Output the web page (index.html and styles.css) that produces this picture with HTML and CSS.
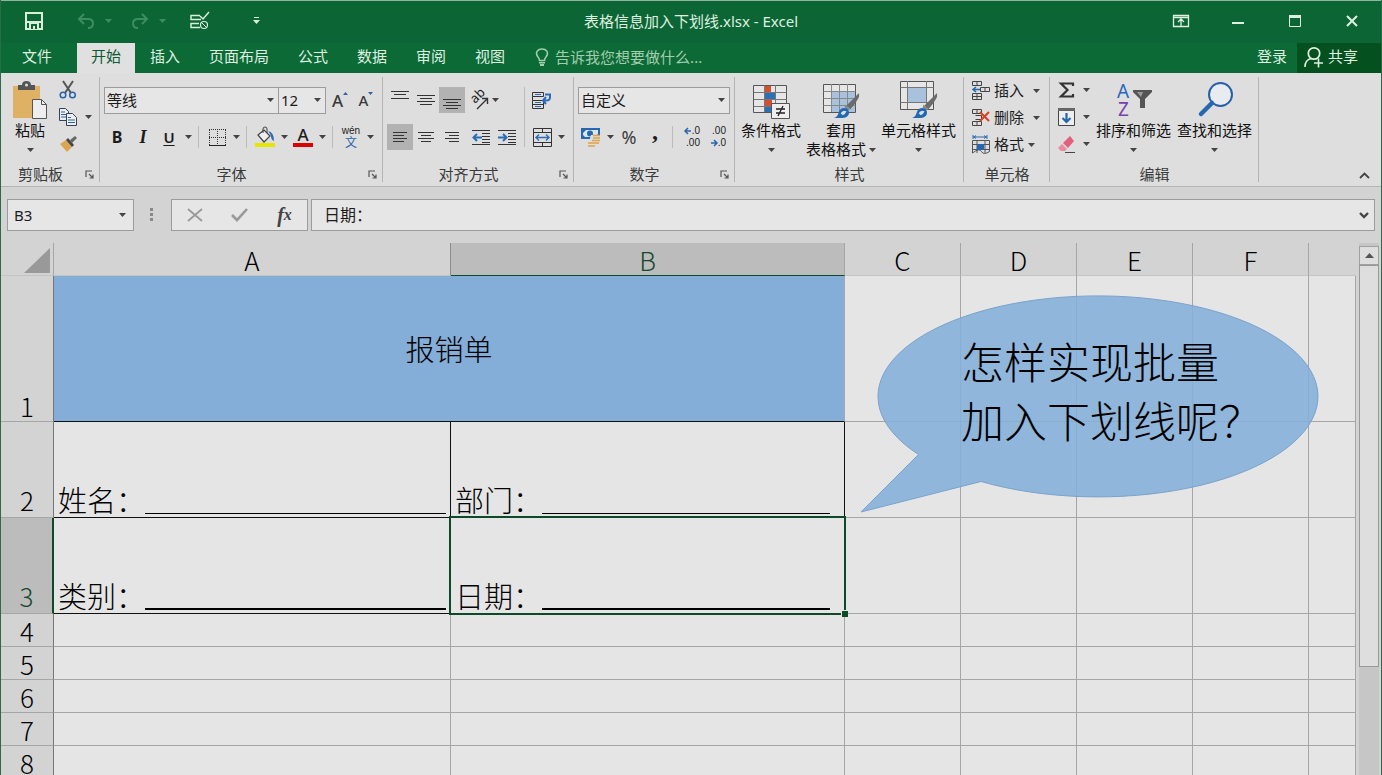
FILE: index.html
```html
<!DOCTYPE html>
<html lang="zh-CN">
<head>
<meta charset="utf-8">
<title>表格信息加入下划线.xlsx - Excel</title>
<link rel="stylesheet" href="styles.css">
</head>
<body>
<svg class="defs" aria-hidden="true">
  <symbol id="caret" viewBox="0 0 7 4"><path d="M0 0h7L3.500 4z" fill="currentColor"/></symbol>
  <symbol id="launch" viewBox="0 0 9 9"><path d="M1 7V1h6M4 4l4 4M8 4.500v3.500H4.500" fill="none" stroke="#555" stroke-width="1.200"/></symbol>
  <symbol id="brush" viewBox="0 0 28 28"><path d="M27 1L14 14l4 4q7-8 9-13z" fill="#6b6b6b"/><path d="M13 13l5 5-3 1-3-3z" fill="#888"/><path d="M1 27q4-1 5-6c1-5 8-6 10-2s-1 8-6 8z" fill="#2567ae"/><path d="M8 22q2-4 6-2-1 3-4 4z" fill="#cfe0f2"/></symbol>
</svg>
<div class="app">
  <header class="titlebar">
    <div class="quick">
      <button class="q-save" aria-label="保存"><svg width="18" height="18" viewBox="0 0 18 18"><path d="M1 1h16v16H1z" fill="none" stroke="#d8efd9" stroke-width="2"/><path d="M1 9h16v2H1zM4 11h10v6H4z" fill="#d8efd9"/><path d="M6 12h6v5h-2v-3H8v3H6z" fill="#0b6634"/></svg></button>
      <button class="q-step dim" aria-label="撤消"><svg width="18" height="16" viewBox="0 0 18 16"><path d="M7 1L2 6l5 5M2 6h9q5 0 5 4.500T11 15" fill="none" stroke="currentColor" stroke-width="2"/></svg><svg class="caret"><use href="#caret"/></svg></button>
      <button class="q-step dim" aria-label="恢复"><svg width="18" height="16" viewBox="0 0 18 16"><path d="M11 1l5 5-5 5M16 6H7q-5 0-5 4.500T7 15" fill="none" stroke="currentColor" stroke-width="2"/></svg><svg class="caret"><use href="#caret"/></svg></button>
      <button class="q-list" aria-label="标记"><svg width="20" height="18" viewBox="0 0 20 18"><path d="M10 3.500H1v4h10M9 11.500H1v4h9M10 4l3 3 6-7" fill="none" stroke="#d8efd9" stroke-width="1.500"/><circle cx="14" cy="13" r="3.500" fill="none" stroke="#d8efd9" stroke-width="1.200"/><path d="M12 11l4 4" stroke="#d8efd9"/></svg></button>
      <button class="q-more" aria-label="自定义快速访问工具栏"><svg width="7" height="8" viewBox="0 0 7 8"><path d="M1 0h5v1H1zM0 3h7L3.500 7z" fill="#d8efd9"/></svg></button>
    </div>
    <h1>表格信息加入下划线.xlsx - Excel</h1>
    <div class="window">
      <button aria-label="功能区显示选项"><svg width="16" height="12" viewBox="0 0 16 12"><path d="M.5.5h15v11H.5zM1 2.500h14M8 11V5M5 7l3-3 3 3" fill="none" stroke="#dff0e0" stroke-width="1.300"/></svg></button>
      <button aria-label="最小化"><svg width="12" height="12" viewBox="0 0 12 12"><path d="M0 7h12v2H0z" fill="#dff0e0"/></svg></button>
      <button aria-label="最大化"><svg width="12" height="12" viewBox="0 0 12 12"><path d="M.5 1.500h11v10H.5z" fill="none" stroke="#dff0e0"/><path d="M0 0h12v3H0z" fill="#dff0e0"/></svg></button>
      <button aria-label="关闭"><svg width="12" height="12" viewBox="0 0 12 12"><path d="M1 1l10 10M11 1L1 11" stroke="#dff0e0" stroke-width="2"/></svg></button>
    </div>
  </header>
  <nav class="tabs">
    <button class="tab file">文件</button>
    <button class="tab active">开始</button>
    <button class="tab">插入</button>
    <button class="tab">页面布局</button>
    <button class="tab">公式</button>
    <button class="tab">数据</button>
    <button class="tab">审阅</button>
    <button class="tab">视图</button>
    <label class="tell"><svg width="14" height="18" viewBox="0 0 14 18"><path d="M4.500 12.500Q4.500 10.500 3 9C-.5 4 3 1 7 1s7.500 3 4 8q-1.500 1.500-1.500 3.500z" fill="none" stroke="currentColor" stroke-width="1.600"/><path d="M4 14h6v1.500H4zM5 16h4v2H5z" fill="currentColor"/></svg><input type="text" placeholder="告诉我您想要做什么..."></label>
    <button class="login">登录</button>
    <button class="share"><svg width="20" height="22" viewBox="0 0 20 22"><circle cx="10" cy="7.500" r="5.700" fill="none" stroke="#dff0e0" stroke-width="1.700"/><path d="M1 21q0-7 6-8.500M10 17h9M14.500 12.500v9" fill="none" stroke="#dff0e0" stroke-width="1.600"/></svg>共享</button>
  </nav>

  <section class="ribbon">
    <div class="group g-clip">
      <div class="body">
        <button class="big paste"><svg width="36" height="38" viewBox="0 0 36 38"><path d="M1 5h27v32H1z" fill="#dfb164"/><path d="M6 9V4h4q0-4 4.500-4T19 4h4v5z" fill="#555"/><circle cx="14.500" cy="4" r="1.500" fill="#ddd"/><path d="M20.500 18.500h9l5 5v14h-14z" fill="#eee" stroke="#555"/><path d="M29.500 18.500v5h5" fill="none" stroke="#555"/></svg><span>粘贴</span><svg class="caret"><use href="#caret"/></svg></button>
        <div class="stack">
          <button aria-label="剪切"><svg width="18" height="18" viewBox="0 0 18 18"><path d="M4 0l8 12M14 0L6 12" stroke="#555" stroke-width="2" fill="none"/><circle cx="4" cy="14" r="2.800" fill="none" stroke="#2b62a8" stroke-width="1.500"/><circle cx="13.500" cy="14" r="2.800" fill="none" stroke="#2b62a8" stroke-width="1.500"/></svg></button>
          <button aria-label="复制"><svg width="18" height="18" viewBox="0 0 18 18"><path d="M.5.5h6l3 3v9h-9z" fill="#eee" stroke="#345"/><path d="M2 4h4M2 6.500h6M2 9h6" stroke="#2b62a8"/><path d="M7.500 5.500h6l4 4v8h-10z" fill="#eee" stroke="#345"/><path d="M9 9.500h3M9 12h7M9 14.500h7" stroke="#2b62a8"/></svg><svg class="caret"><use href="#caret"/></svg></button>
          <button aria-label="格式刷"><svg width="18" height="16" viewBox="0 0 18 16"><path d="M1 8l6-4 6 7-5 5z" fill="#dca552"/><path d="M7 4l2-2 6 7-2 2z" fill="#444"/><path d="M11 4l5-4 2 2-5 5z" fill="#666"/></svg></button>
        </div>
      </div>
      <div class="foot"><span>剪贴板</span><button aria-label="剪贴板设置"><svg width="9" height="9"><use href="#launch"/></svg></button></div>
    </div>

    <div class="group g-font">
      <div class="rows">
        <div class="row">
          <select class="s-font" aria-label="字体"><option>等线</option></select><select class="s-size" aria-label="字号"><option>12</option></select>
          <button class="w26 grow" aria-label="增大字号"><b>A</b><svg width="5" height="3" viewBox="0 0 5 3"><path d="M0 3h5L2.500 0z" fill="#2b62a8"/></svg></button>
          <button class="w26 grow small" aria-label="减小字号"><b>A</b><svg width="5" height="3" viewBox="0 0 5 3"><path d="M0 0h5L2.500 3z" fill="#2b62a8"/></svg></button>
        </div>
        <div class="row">
          <button class="w26 bold">B</button><button class="w26 ital">I</button><button class="w26 under">U</button><button class="drop"><svg class="caret"><use href="#caret"/></svg></button><i class="sep"></i>
          <button class="w26" aria-label="边框"><svg width="17" height="17" viewBox="0 0 17 17"><path d="M.5 16V0M16.500 16V0M0 .5h17M8.500 0v17M0 8.500h17" stroke="#333" stroke-dasharray="1 1"/><path d="M0 16.500h17" stroke="#222"/></svg></button><button class="drop"><svg class="caret"><use href="#caret"/></svg></button><i class="sep"></i>
          <button class="w26" aria-label="填充颜色"><svg width="20" height="20" viewBox="0 0 20 20"><path d="M3 8l6-5 6 6-6 6z" fill="#eee" stroke="#444" stroke-width="1.200"/><path d="M8 6V2q0-2 2-2t2 2v4" fill="none" stroke="#444"/><path d="M13 4q6 1 6 10-3-1-3-5-1-3-3-5z" fill="#2b6cb8"/><path d="M0 16h20v4H0z" fill="#e6e600"/></svg></button><button class="drop"><svg class="caret"><use href="#caret"/></svg></button>
          <button class="w26 colour" aria-label="字体颜色"><b>A</b></button><button class="drop"><svg class="caret"><use href="#caret"/></svg></button><i class="sep"></i>
          <button class="w26 wen" aria-label="拼音指南"><small>wén</small><span>文</span></button><button class="drop"><svg class="caret"><use href="#caret"/></svg></button>
        </div>
      </div>
      <div class="foot"><span>字体</span><button aria-label="字体设置"><svg width="9" height="9"><use href="#launch"/></svg></button></div>
    </div>

    <div class="group g-align">
      <div class="body">
        <div class="rows">
          <div class="row">
            <button class="w26" aria-label="顶端对齐"><svg width="18" height="20" viewBox="0 0 18 20"><path d="M0 1.500h18M3 4.500h12M0 8.500h18" stroke="#333"/></svg></button><button class="w26" aria-label="垂直居中"><svg width="18" height="16" viewBox="0 0 18 16"><path d="M0 3.500h18M3 6.500h12M0 9.500h18M3 12.500h12" stroke="#333"/></svg></button><button class="w26 on" aria-label="底端对齐"><svg width="18" height="18" viewBox="0 0 18 18"><path d="M0 8.500h18M3 11.500h12M0 14.500h18M3 17.500h12" stroke="#333"/></svg></button>
            <button class="turn" aria-label="方向"><svg width="20" height="20" viewBox="0 0 20 20"><text x="0" y="0" transform="translate(6 14) rotate(-45)" font-size="13" fill="#222" class="svgtext">ab</text><path d="M8 19L18 9M13 8.500h5.500V14" fill="none" stroke="#333" stroke-width="1.400"/></svg><svg class="caret"><use href="#caret"/></svg></button>
          </div>
          <div class="row">
            <button class="w26 on" aria-label="左对齐"><svg width="14" height="12" viewBox="0 0 14 12"><path d="M0 1.500h14M0 4.500h11M0 7.500h14M0 10.500h11" stroke="#333"/></svg></button><button class="w26" aria-label="居中"><svg width="16" height="12" viewBox="0 0 16 12"><path d="M0 1.500h16M3 4.500h10M0 7.500h16M3 10.500h10" stroke="#333"/></svg></button><button class="w26" aria-label="右对齐"><svg width="14" height="12" viewBox="0 0 14 12"><path d="M0 1.500h14M4 4.500h10M0 7.500h14M4 10.500h10" stroke="#333"/></svg></button>
            <button class="w26 indent" aria-label="减少缩进"><svg width="18" height="17" viewBox="0 0 18 17"><path d="M0 1.500h18M10 4.500h8M10 7.500h8M10 10.500h8M0 15.500h18M10 13.500h8" stroke="#333"/><path d="M10 8.500H2M5 5L1.500 8.500 5 12" fill="none" stroke="#2b6cb8" stroke-width="2"/></svg></button><button class="w26" aria-label="增加缩进"><svg width="18" height="17" viewBox="0 0 18 17"><path d="M0 1.500h18M10 4.500h8M10 7.500h8M10 10.500h8M0 15.500h18M10 13.500h8" stroke="#333"/><path d="M0 8.500h8M5 5l3.500 3.500L5 12" fill="none" stroke="#2b6cb8" stroke-width="2"/></svg></button>
          </div>
        </div>
        <i class="sep tall"></i>
        <div class="rows">
          <div class="row"><button class="w26" aria-label="自动换行"><svg width="20" height="19" viewBox="0 0 20 19"><path d="M.5 1.500h11v4H.5zM.5 9.500h11v8H.5zM.5 5.500v4M.5 13.500h11" fill="none" stroke="#333"/><path d="M3 3.500h6M3 11.500h6M3 15.500h6" stroke="#2b6cb8"/><path d="M13 3.500h5v3q0 3-4 3h-2M14 6l-3 3.500L14 13" fill="none" stroke="#2b6cb8" stroke-width="2"/></svg></button></div>
          <div class="row"><button class="w26" aria-label="合并后居中"><svg width="19" height="19" viewBox="0 0 19 19"><path d="M.5.500h18v18H.5zM.5 4.500h18M.5 14.500h18M9.500 0v4M9.500 15v4" fill="none" stroke="#333"/><path d="M3 9.500h13M6 6.500l-3 3 3 3M13 6.500l3 3-3 3" fill="none" stroke="#2b6cb8" stroke-width="1.400"/></svg></button><button class="drop"><svg class="caret"><use href="#caret"/></svg></button></div>
        </div>
      </div>
      <div class="foot"><span>对齐方式</span><button aria-label="对齐设置"><svg width="9" height="9"><use href="#launch"/></svg></button></div>
    </div>

    <div class="group g-num">
      <div class="rows">
        <div class="row"><select class="s-num" aria-label="数字格式"><option>自定义</option></select></div>
        <div class="row">
          <button class="w26" aria-label="会计数字格式"><svg width="20" height="19" viewBox="0 0 20 19"><path d="M0 0h19v11H0z" fill="#2767b0"/><path d="M2 2h15v7H2z" fill="#d8e4f0"/><path d="M2 2h3L2 5zM17 9V6l-3 3zM2 9V7l2 2z" fill="#2767b0"/><circle cx="9" cy="5.500" r="3" fill="#2767b0"/><path d="M10 7h9v12h-7v-3h-3v-6z" fill="#dedede"/><path d="M12 7.500h7M12 10h7M11 12.500h8M7 15h11M7 18h7" stroke="#dfa348" stroke-width="1.700"/></svg></button><button class="drop"><svg class="caret"><use href="#caret"/></svg></button><button class="w26 pct">%</button><button class="w26 comma">,</button><i class="sep"></i>
          <button class="w26 dec" aria-label="增加小数位数"><span><svg width="6" height="6" viewBox="0 0 6 6"><path d="M6 3H1M3 0L0 3l3 3" fill="none" stroke="#2767b0" stroke-width="1.500"/></svg>.0</span><span>.00</span></button><button class="w26 dec" aria-label="减少小数位数"><span>.00</span><span><svg width="6" height="6" viewBox="0 0 6 6"><path d="M0 3h5M3 0l3 3-3 3" fill="none" stroke="#2767b0" stroke-width="1.500"/></svg>.0</span></button>
        </div>
      </div>
      <div class="foot"><span>数字</span><button aria-label="数字设置"><svg width="9" height="9"><use href="#launch"/></svg></button></div>
    </div>

    <div class="group g-style">
      <div class="body">
        <button class="big"><svg width="37" height="38" viewBox="0 0 37 38"><path d="M.5 4.500h33v27H.5z" fill="#e6e6e6" stroke="#555"/><path d="M11 5h7v7h-7zM11 18h8v7h-8z" fill="#d8502b"/><path d="M11 12h11v6H11zM11 25h7v6h-7z" fill="#2a70b8"/><path d="M.5 11.500h33M.5 18.500h33M.5 25.500h33M11.500 4v27M22.500 4v27" stroke="#777" fill="none"/><path d="M18.500 22.500h18v15h-18z" fill="#eee" stroke="#555"/><path d="M23 28h9M23 32h9M30 25l-5 10" stroke="#222" stroke-width="1.300"/></svg><span>条件格式</span><svg class="caret"><use href="#caret"/></svg></button>
        <button class="big"><svg width="37" height="38" viewBox="0 0 37 38"><path d="M.5 3.500h32v28H.5z" fill="#e6e6e6" stroke="#555"/><path d="M9 11h23v20H9z" fill="#a8c2de"/><path d="M.5 10.500h32M.5 17.500h32M.5 24.500h32M8.500 3v28M16.500 3v28M24.500 3v28" stroke="#888"/><use href="#brush" x="10" y="11" width="27" height="27"/></svg><span>套用</span><span>表格格式<svg class="caret"><use href="#caret"/></svg></span></button>
        <button class="big"><svg width="38" height="38" viewBox="0 0 38 38"><path d="M.5.500h33v28H.5z" fill="#e6e6e6" stroke="#555"/><path d="M8 7h18v14H8z" fill="#a8c2de"/><path d="M.5 6.500h33M.5 21.500h33M7.500 0v28M26.500 0v28" stroke="#777"/><use href="#brush" x="11" y="11" width="27" height="27"/></svg><span>单元格样式</span><svg class="caret"><use href="#caret"/></svg></button>
      </div>
      <div class="foot"><span>样式</span></div>
    </div>

    <div class="group g-cell">
      <div class="list">
        <button><svg width="18" height="19" viewBox="0 0 18 19"><path d="M.5.500h9v4h-9zM5 0v5M8.500 6.500h9v4h-9zM13 6v5M.5 12.500h9v6h-9zM5 12v6M.5 15.500h9" fill="none" stroke="#444"/><path d="M8 8.500H1M4 6L1 8.500 4 11" fill="none" stroke="#2767b0" stroke-width="1.500"/></svg><span>插入</span><svg class="caret"><use href="#caret"/></svg></button>
        <button><svg width="18" height="17" viewBox="0 0 18 17"><path d="M.5.500h9v4h-9zM5 0v5M3.500 6.500h6v4h-6M.5 12.500h9v4h-9zM5 12v5" fill="none" stroke="#444"/><path d="M8 3l9 9M17 3l-9 9" stroke="#d8401f" stroke-width="2"/></svg><span>删除</span><svg class="caret"><use href="#caret"/></svg></button>
        <button class="fmt"><svg width="18" height="19" viewBox="0 0 18 19"><path d="M1 0v4M15 0v4M1 2h14M4 .5L2 2l2 1.500M12 .5L14 2l-2 1.500" fill="none" stroke="#2767b0"/><path d="M.5 5.500h17v11q-6 4-8 0T.5 18zM.5 9.500h17M.5 14.500h17M5 5v13M13 5v13" fill="none" stroke="#555"/><path d="M5 9h7v6H5z" fill="#2767b0"/></svg><span>格式</span><svg class="caret"><use href="#caret"/></svg></button>
      </div>
      <div class="foot"><span>单元格</span></div>
    </div>

    <div class="group g-edit">
      <div class="body">
        <div class="stack">
          <button aria-label="自动求和"><svg width="17" height="16" viewBox="0 0 17 16"><path d="M15 4V1.500H3L9.500 8 3 14.500h12V12" fill="none" stroke="#333" stroke-width="2.200"/></svg><svg class="caret"><use href="#caret"/></svg></button>
          <button aria-label="填充"><svg width="17" height="18" viewBox="0 0 17 18"><path d="M.5.500h16v17H.5z" fill="#eee" stroke="#444"/><path d="M0 0h17v3H0z" fill="#666"/><path d="M8.500 5v9M4.500 10l4 4 4-4" fill="none" stroke="#2767b0" stroke-width="2.200"/></svg><svg class="caret"><use href="#caret"/></svg></button>
          <button aria-label="清除"><svg width="17" height="17" viewBox="0 0 17 17"><path d="M5 7l7-7 4 5-6 7z" fill="#e2607a"/><path d="M4 8l5 5-2 2H3l-3-3z" fill="#e98b9c"/><path d="M7 16.500h10" stroke="#444"/></svg><svg class="caret"><use href="#caret"/></svg></button>
        </div>
        <button class="big"><svg width="36" height="38" viewBox="0 0 36 38"><text x="1" y="17" font-size="19" fill="#2767c0" class="svgtext">A</text><text x="2" y="35" font-size="19" fill="#7a3fb0" class="svgtext">Z</text><path d="M17 9h19v2l-7 7v9h-5v-9l-7-7z" fill="#555"/><path d="M21 11h6l-2 5z" fill="#999"/></svg><span>排序和筛选</span><svg class="caret"><use href="#caret"/></svg></button>
        <button class="big"><svg width="36" height="38" viewBox="0 0 36 38"><circle cx="23.500" cy="13.500" r="11.500" fill="#e8ecf0" stroke="#2760a8" stroke-width="2"/><path d="M15 22L4 33" stroke="#2767b0" stroke-width="4.500" stroke-linecap="round"/></svg><span>查找和选择</span><svg class="caret"><use href="#caret"/></svg></button>
      </div>
      <div class="foot"><span>编辑</span></div>
    </div>
    <button class="collapse" aria-label="折叠功能区"><svg width="11" height="7" viewBox="0 0 11 7"><path d="M1 6l4.500-4.500L10 6" fill="none" stroke="#444" stroke-width="1.800"/></svg></button>
  </section>

  <section class="formula">
    <select class="name" aria-label="名称框"><option>B3</option></select>
    <svg class="dots" width="4" height="14" viewBox="0 0 4 14"><path d="M0 0h3v3H0zM0 5h3v3H0zM0 10h3v3H0z" fill="#888"/></svg>
    <div class="entry">
      <button aria-label="取消"><svg width="16" height="14" viewBox="0 0 16 14"><path d="M1 1l14 12M15 1L1 13" stroke="#999" stroke-width="1.800"/></svg></button>
      <button aria-label="输入"><svg width="17" height="14" viewBox="0 0 17 14"><path d="M1 7l5 5L16 1" fill="none" stroke="#999" stroke-width="2.600"/></svg></button>
      <button class="fx" aria-label="插入函数">f<sub>x</sub></button>
    </div>
    <label class="edit"><input type="text" aria-label="编辑栏" value="日期："><svg width="10" height="7" viewBox="0 0 10 7"><path d="M1 1l4 4 4-4" fill="none" stroke="#444" stroke-width="2.400"/></svg></label>
  </section>

  <main class="sheet">
    <table>
      <colgroup><col class="c-head"><col class="c-a"><col class="c-b"><col class="c-n"><col class="c-n"><col class="c-n"><col class="c-n"><col></colgroup>
      <thead><tr><th><svg class="corner" width="26" height="25" viewBox="0 0 26 25"><path d="M26 0v25H0z" fill="#999"/></svg></th><th>A</th><th class="sel">B</th><th>C</th><th>D</th><th>E</th><th>F</th><th class="cut"></th></tr></thead>
      <tbody>
        <tr class="r1"><th>1</th><td colspan="2" class="heading">报销单</td><td></td><td></td><td></td><td></td><td></td></tr>
        <tr class="r2"><th>2</th><td class="ink"><div class="line">姓名：<span></span></div></td><td class="ink"><div class="line short">部门：<span></span></div></td><td></td><td></td><td></td><td></td><td></td></tr>
        <tr class="r3"><th class="sel">3</th><td class="ink"><div class="line thick">类别：<span></span></div></td><td class="ink picked"><div class="line thick short">日期：<span></span></div></td><td></td><td></td><td></td><td></td><td></td></tr>
        <tr><th>4</th><td></td><td></td><td></td><td></td><td></td><td></td><td></td></tr>
        <tr><th>5</th><td></td><td></td><td></td><td></td><td></td><td></td><td></td></tr>
        <tr><th>6</th><td></td><td></td><td></td><td></td><td></td><td></td><td></td></tr>
        <tr><th>7</th><td></td><td></td><td></td><td></td><td></td><td></td><td></td></tr>
        <tr><th>8</th><td></td><td></td><td></td><td></td><td></td><td></td><td></td></tr>
      </tbody>
    </table>
    <div class="scroll"><button aria-label="向上滚动"><svg width="9" height="5" viewBox="0 0 9 5"><path d="M0 5h9L4.500 0z" fill="#555"/></svg></button><div class="thumb"></div></div>
    <div class="bubble">
      <svg width="460" height="222" viewBox="0 0 460 222"><path d="M58.500 161.500A220 100.500 0 1 1 121 188.500L1 219z" fill="#84afd9" fill-opacity=".88" stroke="#7aa2cc"/></svg>
      <p>怎样实现批量<br>加入下划线呢？</p>
    </div>
  </main>
</div>
</body>
</html>
```

FILE: styles.css
```css
* { box-sizing: border-box; }
body {
  margin: 0;
  font-family: "Noto Sans", "Noto Sans CJK SC", sans-serif;
  font-size: 15px;
  line-height: 19px;
  color: #1c1c1c;
}
button, input, select { font: inherit; color: inherit; }
button {
  display: flex;
  align-items: center;
  justify-content: center;
  padding: 0;
  border: 0;
  background: none;
}
svg { display: block; flex: none; overflow: visible; }
.defs { position: absolute; width: 0; height: 0; }
.svgtext { font-family: "Noto Sans", sans-serif; }
.caret { width: 7px; height: 4px; color: #444; }
.app {
  display: flex;
  flex-direction: column;
  height: 100vh;
  overflow: hidden;
  background: #d3d3d3;
  border-left: 1px solid #2a6b49;
  border-right: 1px solid #2a6b49;
}

.titlebar {
  display: grid;
  grid-template-columns: 1fr auto 1fr;
  align-items: center;
  height: 43px;
  flex: none;
  padding-bottom: 2px;
  border-top: 1px solid #8fb59c;
  background: #0c6535;
  color: #dff0e0;
}
.titlebar h1 { margin: 0; font-size: 15px; font-weight: 400; }
.quick { display: flex; align-items: center; padding-left: 24px; }
.q-save { width: 18px; margin-right: 34px; }
.q-step { width: 54px; gap: 10px; justify-content: flex-start; }
.dim, .dim .caret { color: #3f8c5e; }
.q-list { width: 20px; margin-left: 5px; }
.q-more { width: 20px; margin-left: 36px; }
.window { display: flex; justify-content: flex-end; padding-right: 1px; }
.window button { width: 57px; height: 40px; }

.tabs { display: flex; height: 30px; flex: none; background: #0c6a36; color: #dff0e0; }
.tab { padding: 0 14px 3px; margin-right: 1px; }
.tab.file { width: 75px; padding: 0 3px 3px 0; }
.tab.active { background: #e0e0e0; color: #0c5a30; }
.tell { display: flex; align-items: center; flex: 1; gap: 6px; margin-left: 15px; padding-bottom: 2px; color: #a3cdae; }
.tell input { flex: 1; border: 0; padding: 0; background: none; }
.tell input::placeholder { color: #a3cdae; opacity: 1; }
.login { margin-right: 10px; padding-bottom: 3px; }
.share { width: 84px; gap: 4px; padding: 0 16px 3px 0; background: #04501f; }

.ribbon {
  display: flex;
  height: 114px;
  flex: none;
  background: #dedede;
  border-bottom: 1px solid #b4b4b4;
}
.group {
  display: flex;
  flex-direction: column;
  justify-content: space-between;
  position: relative;
  padding: 8px 4px 2px;
}
.group::after {
  content: "";
  position: absolute;
  right: 0;
  top: 4px;
  bottom: 4px;
  border-right: 1px solid #b4b4b4;
}
.g-clip { width: 99px; }
.g-font { width: 283px; }
.g-align { width: 191px; }
.g-num { width: 161px; }
.g-style { width: 229px; }
.g-cell { width: 86px; }
.g-edit { width: 209px; }
.foot { display: flex; align-items: center; color: #3a3a3a; }
.foot span { flex: 1; text-align: center; }
.foot span:not(:last-child) { padding-right: 6px; }
.foot button { width: 14px; height: 14px; }
.body { display: flex; }
.rows { display: flex; flex-direction: column; gap: 11px; padding-top: 6px; }
.row { display: flex; align-items: center; height: 26px; }
.w26 { width: 26px; height: 26px; }
.drop { width: 12px; height: 26px; }
.on { background: #b2b2b2; }
.sep { width: 1px; height: 22px; margin: 0 5px 0 4px; background: #bbb; }
.big { flex-direction: column; justify-content: flex-start; color: #111; }
.big > svg:first-child { margin-bottom: 2px; }
.big > span { display: flex; align-items: center; gap: 3px; white-space: nowrap; }
.big > .caret { margin-top: 8px; }
.stack { display: flex; flex-direction: column; gap: 9px; }
.stack button { height: 18px; justify-content: flex-start; gap: 8px; }
.paste { width: 50px; }
.g-clip .body { gap: 4px; }

select {
  height: 27px;
  padding: 0 2px;
  border: 1px solid #9c9c9c;
  border-radius: 0;
  appearance: none;
  background: #e6e6e6 url("data:image/svg+xml,%3Csvg xmlns='http://www.w3.org/2000/svg' width='7' height='4'%3E%3Cpath d='M0 0h7L3.5 4z' fill='%23444'/%3E%3C/svg%3E") no-repeat right 4px center;
}
.s-font { width: 175px; }
.s-size { width: 48px; margin-left: -1px; margin-right: 1px; }
.s-num { width: 152px; }
.grow { font-size: 17px; color: #3a3a3a; }
.grow b, .colour b { font-weight: 500; }
.grow svg { margin-bottom: 14px; }
.grow.small { font-size: 15px; }
.bold { font-weight: 700; font-size: 16px; }
.ital { font: italic 700 18px "Liberation Serif", serif; }
.under { font-weight: 600; text-decoration: underline; text-underline-offset: 2px; }
.colour { font-size: 17px; line-height: 16px; }
.colour b { width: 20px; border-bottom: 4px solid #dd0000; }
.wen { flex-direction: column; }
.wen small { font: 10px/11px "Liberation Sans", sans-serif; }
.wen span { font-size: 12px; line-height: 13px; color: #2767b0; }
.turn { width: 38px; height: 26px; gap: 3px; }
.indent { margin-left: 3px; }
.tall { height: 60px; margin: 6px 4px 0; }
.pct { font-size: 18px; color: #3a3a3a; }
.comma { font: 700 24px "Liberation Serif", serif; padding-bottom: 12px; }
.dec {
  flex-direction: column;
  align-items: flex-end;
  padding-right: 4px;
  font: 10px/12px "Liberation Sans", sans-serif;
}
.dec span { display: flex; align-items: center; gap: 1px; }

.g-style .body { gap: 5px; padding: 0 2px; }
.list { display: flex; flex-direction: column; gap: 8px; padding: 0 4px; }
.list button { height: 19px; gap: 4px; justify-content: flex-start; }
.list .caret { margin-left: 5px; }
.list .fmt .caret { margin-left: 0; }
.g-edit .body { gap: 6px; }
.g-edit .stack { width: 36px; padding-left: 4px; }
.collapse { width: 26px; height: 20px; margin: auto 4px 1px auto; }

.formula { display: flex; align-items: center; flex: none; height: 56px; padding: 0 6px; }
.formula select { width: 127px; height: 32px; padding-left: 6px; background-position: right 7px center; }
.dots { margin: 0 17px 0 16px; }
.entry { display: flex; width: 137px; height: 32px; border: 1px solid #9c9c9c; background: #e6e6e6; }
.entry button { flex: 1; }
.fx { font: italic 700 20px "Liberation Serif", serif; color: #444; }
.fx sub { font-size: 16px; line-height: 10px; }
.edit {
  display: flex;
  align-items: center;
  flex: 1;
  height: 32px;
  margin-left: 3px;
  padding: 0 5px 0 12px;
  border: 1px solid #9c9c9c;
  background: #e6e6e6;
}
.edit input { flex: 1; border: 0; padding: 0 0 2px; background: none; font-family: "Noto Sans CJK SC", sans-serif; font-size: 16px; }

.sheet {
  display: flex;
  flex: 1;
  align-items: flex-start;
  position: relative;
  min-height: 0;
  overflow: hidden;
  font-family: "Noto Sans CJK SC", sans-serif;
  font-weight: 300;
}
table { flex: 1; width: 0; table-layout: fixed; border-collapse: separate; border-spacing: 0; color: #000; background: #e5e5e5; }
.c-head { width: 53px; }
.c-a { width: 397px; }
.c-b { width: 394px; }
.c-n { width: 116px; }
tr { height: 33px; }
th, td { padding: 0; border-right: 1px solid #a6a6a6; border-bottom: 1px solid #a6a6a6; }
th { background: #d3d3d3; font-size: 26px; line-height: 30px; font-weight: 300; vertical-align: bottom; }
thead th { border-bottom-color: #c4c4c4; }
thead th.cut { border-right-color: #d3d3d3; }
thead th:nth-child(2) { border-right-color: #8c8c8c; }
thead th.sel { background: #bcbcbc; color: #15482e; border-bottom-color: #0f4a28; }
tbody th { border-right-color: #777; }
tbody th.sel { background: #bcbcbc; color: #15482e; border-right: 2px solid #0f4a28; }
.corner { margin: 0 0 2px 23px; }
.r1 { height: 146px; }
.r2, .r3 { height: 96px; }
.r2 th, .r3 th { padding-bottom: 2px; }
.heading { background: #84add7; font-size: 29px; text-align: center; border-bottom-color: #111; }
.ink { position: relative; vertical-align: bottom; border-color: #111; }
.line { display: flex; padding: 0 4px; font-size: 29px; line-height: 35px; }
.line span { flex: 1; margin-bottom: 3px; border-bottom: 1px solid #000; }
.line.thick span { border-bottom-width: 2px; }
.line.short { padding-right: 14px; }
.picked::before {
  content: "";
  position: absolute;
  inset: -2px;
  border: 2px solid #0f4a28;
}
.picked::after {
  content: "";
  position: absolute;
  right: -4px;
  bottom: -4px;
  width: 6px;
  height: 6px;
  border: 1px solid #e5e5e5;
  border-width: 1px 0 0 1px;
  background: #0f4a28;
}
.scroll { display: flex; flex-direction: column; width: 20px; height: 100%; margin: 0 2px 0 3px; padding-top: 3px; background: #c6c6c6; }
.scroll button { height: 19px; border: 1px solid #a0a0a0; background: #dedede; }
.thumb { height: 402px; border: 1px solid #999; background: #dedede; }
.bubble { position: absolute; left: 859px; top: 50px; }
.bubble p {
  position: absolute;
  left: 101px;
  top: 38px;
  margin: 0;
  font-size: 43px;
  line-height: 59px;
  white-space: nowrap;
  color: #000;
}
```
